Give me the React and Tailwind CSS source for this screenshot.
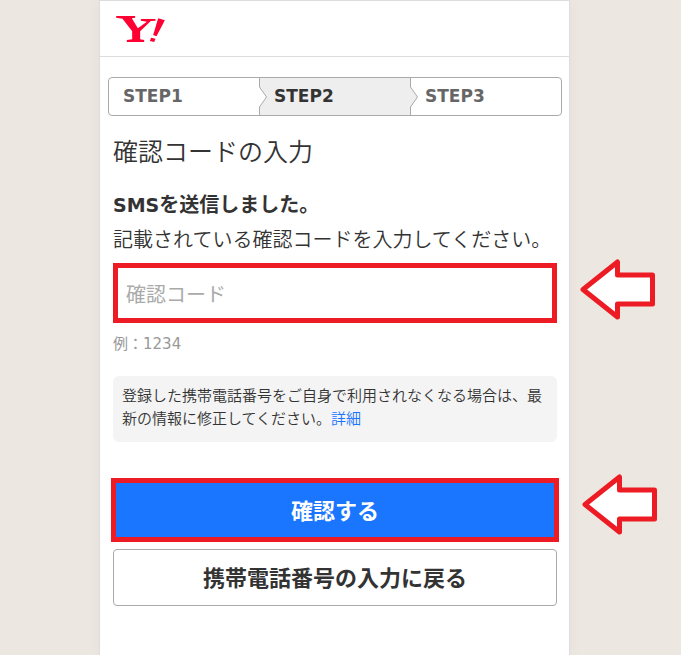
import React, { useState } from "react";
import clsx from "clsx";

const steps = ["STEP1", "STEP2", "STEP3"];
const currentStep = 1;

const Logo = () => (
  <svg viewBox="0 0 146 78" className="w-[49px] h-[26px]" fill="#ff0033" role="img" aria-label="Yahoo! JAPAN">
    <path d="M0 0H57V5L47 7L65 37L92 17L74 14V9H118V14L104 15L72 46V70L84 72V78H32V72L48 70V46L19 8L0 5Z" />
    <path d="M126 7L146 13L121 61L111 57Z" />
    <path d="M105 65L118 68L114 78L101 75Z" />
  </svg>
);

const Chevron = ({ active }) => (
  <svg
    viewBox="0 0 9 22"
    className={clsx("absolute -left-px top-2 w-[9px] h-[22px]", active ? "fill-[#eeeeee]" : "fill-white")}
  >
    <path d="M0 1L1 1L7.5 11L1 21L0 21Z" />
    <path d="M0.5 1L7.5 11L0.5 21" fill="none" stroke="#aaaaaa" />
  </svg>
);

const Arrow = () => (
  <svg
    viewBox="0 0 76 62"
    className="absolute left-full -top-1 ml-[23px] w-[76px] h-[62px]"
    fill="#ffffff" stroke="#ed1c24" strokeWidth="5" strokeLinejoin="round"
    aria-hidden="true"
  >
    <path d="M3 30.5L37.5 3V16H72.5V45H37.5V58Z" />
  </svg>
);

const App = () => {
  const [code, setCode] = useState("");

  return (
    <div className="min-h-screen grid grid-cols-[99px_1fr_111px] bg-[#ece7e0] text-[#333333] font-['DejaVu_Sans','Noto_Sans_CJK_JP',sans-serif]">
      <div className="col-start-2 bg-white border border-b-0 border-[#dddddd] shadow-[0_0_14px_rgba(0,0,0,0.04)]">
        {/* Header */}
        <header className="h-14 flex items-center px-4 border-b border-[#dddddd]">
          <a href="#top"><Logo /></a>
        </header>

        {/* Steps */}
        <ol className="flex mt-5 ml-2 mr-[7px] h-[39px] rounded border border-[#aaaaaa] text-[17px] font-bold">
          {steps.map((step, i) => (
            <li
              key={step}
              className={clsx(
                "relative flex-1 flex items-center pl-[14px]",
                i > 0 && "border-l border-[#aaaaaa]",
                i === currentStep ? "bg-[#eeeeee] text-[#333333]" : "text-[#666666]"
              )}
            >
              {i > 0 && <Chevron active={i - 1 === currentStep} />}
              {step}
            </li>
          ))}
        </ol>

        <main className="pl-[13px] pr-3 pt-[18px] pb-12">
          <h1 className="text-[25px] leading-[38px] font-[350]">確認コードの入力</h1>

          <form onSubmit={(e) => e.preventDefault()}>
            <p className="mt-4 text-xl leading-[35px] font-bold">
              <span className="text-[19px]">SMS</span>を送信しました。
            </p>
            <label htmlFor="code" className="block text-xl leading-[35px] font-[350] whitespace-nowrap">
              記載されている確認コードを入力してください。
            </label>

            {/* Code */}
            <div className="relative mt-[5px]">
              <input
                id="code" type="text" inputMode="numeric"
                value={code}
                onChange={(e) => setCode(e.target.value)}
                placeholder="確認コード"
                className="block w-full h-[60px] px-2 pt-1 border-5 border-[#ed1c24] bg-white text-xl placeholder:text-[#aaaaaa] focus:outline-none"
              />
              <Arrow />
            </div>
            <p className="mt-[9px] text-[15px] leading-6 text-[#999999]">例：1234</p>

            <p className="mt-5 h-[66px] rounded-md bg-[#f4f4f4] px-[9px] py-[9px] text-[15px] leading-[23px] font-[350]">
              登録した携帯電話番号をご自身で利用されなくなる場合は、最新の情報に修正してください。
              <a href="#detail" className="text-[#1a75ff] hover:underline">詳細</a>
            </p>

            {/* Actions */}
            <div className="relative mt-9 -mx-0.5">
              <button
                type="submit"
                className="block w-full h-16 pt-0.5 border-5 border-[#ed1c24] bg-[#1a75ff] text-white text-[22px] font-bold cursor-pointer"
              >
                確認する
              </button>
              <Arrow />
            </div>
            <button
              type="button"
              className="block w-full h-[57px] pt-0.5 mt-[7px] rounded border border-[#aaaaaa] bg-white text-[22px] font-bold cursor-pointer"
            >
              携帯電話番号の入力に戻る
            </button>
          </form>
        </main>
      </div>
    </div>
  );
};

export default App;
